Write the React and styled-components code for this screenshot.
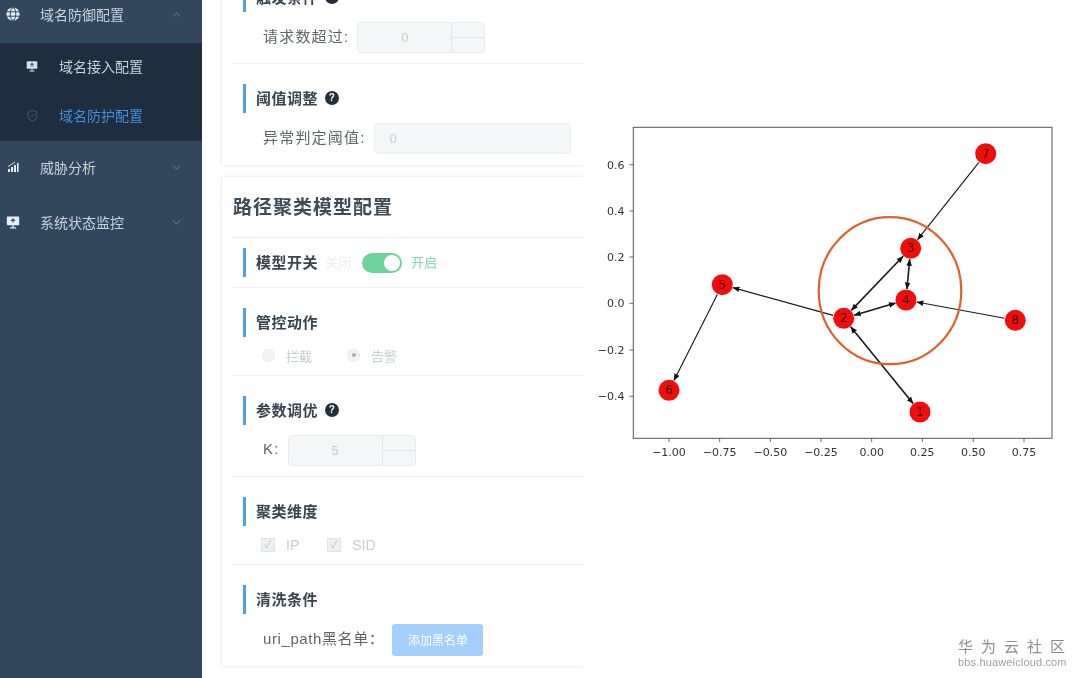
import React from 'react';
import styled, { createGlobalStyle } from 'styled-components';
import { ShieldCheck, ChevronDown, ChevronUp } from 'lucide-react';

const FONT = '"Liberation Sans", "Noto Sans CJK SC", sans-serif';

// graph data, in page pixels
const NODES = {
  1: [920, 412],
  2: [843.7, 318.3],
  3: [910.7, 248.3],
  4: [906, 300],
  5: [722.3, 284.7],
  6: [669, 390.3],
  7: [985.7, 153.7],
  8: [1015.3, 320.3],
};

const EDGES = [
  [1, 2, true],
  [2, 3, true],
  [2, 4, true],
  [3, 4, true],
  [2, 5, false],
  [5, 6, false],
  [7, 3, false],
  [8, 4, false],
];

const X_TICKS = [
  ['−1.00', 669],
  ['−0.75', 719.7],
  ['−0.50', 770.3],
  ['−0.25', 821],
  ['0.00', 871.7],
  ['0.25', 922.3],
  ['0.50', 973.3],
  ['0.75', 1024],
];

const Y_TICKS = [
  ['0.6', 164.7],
  ['0.4', 211],
  ['0.2', 257],
  ['0.0', 303.3],
  ['−0.2', 350],
  ['−0.4', 396.3],
];

const edgeLine = ([from, to]) => {
  const [x1, y1] = NODES[from];
  const [x2, y2] = NODES[to];
  const len = Math.hypot(x2 - x1, y2 - y1);
  const ux = (x2 - x1) / len;
  const uy = (y2 - y1) / len;
  const gap = 11;
  return {
    x1: x1 + ux * gap,
    y1: y1 + uy * gap,
    x2: x2 - ux * gap,
    y2: y2 - uy * gap,
  };
};

const BarsIcon = () => (
  <svg width="12" height="12" viewBox="0 0 12 12" fill="currentColor">
    <rect x="1" y="8" width="2" height="3" />
    <rect x="4" y="6" width="2" height="5" />
    <rect x="7" y="4" width="2" height="7" />
    <rect x="10" y="2" width="1.6" height="9" />
    <path d="M1 5.5 L6 2.5 L8 1" fill="none" stroke="currentColor" strokeWidth="0.9" />
  </svg>
);

const GlobeIcon = () => (
  <svg width="14" height="14" viewBox="0 0 14 14">
    <circle cx="7" cy="7" r="6.6" fill="currentColor" />
    <g fill="none" stroke="#33475c" strokeWidth="1">
      <ellipse cx="7" cy="7" rx="2.8" ry="6.4" />
      <path d="M0.6 4.8 H13.4 M0.6 9.2 H13.4" />
    </g>
  </svg>
);

const ScreenIcon = ({ size, back }) => (
  <svg width={size} height={size} viewBox="0 0 14 14">
    <rect x="0.8" y="1.4" width="12.4" height="8.8" rx="1" fill="currentColor" />
    <path d="M5 5.8 L7 4 L9 5.8 M7 4.4 V7.6" fill="none" stroke={back} strokeWidth="1.1" />
    <path d="M7 10 V12.4 M4 12.8 H10" fill="none" stroke="currentColor" strokeWidth="1.3" />
  </svg>
);

const Graph = () => (
  <ChartSvg viewBox="583 0 497 480">
    <defs>
      <marker
        id="head"
        viewBox="0 0 8 8"
        refX="7.5"
        refY="4"
        markerWidth="7"
        markerHeight="7"
        markerUnits="userSpaceOnUse"
        orient="auto-start-reverse"
      >
        <path d="M0 0.8 L8 4 L0 7.2 Z" fill="#111" />
      </marker>
    </defs>
    <rect x="633.3" y="127.3" width="418.7" height="311" fill="none" stroke="#555" strokeWidth="1" />
    {X_TICKS.map(([label, x]) => (
      <g key={label}>
        <line x1={x} x2={x} y1="438.3" y2="442" stroke="#444" strokeWidth="0.8" />
        <text x={x} y="456" textAnchor="middle" fontSize="11" fill="#333">
          {label}
        </text>
      </g>
    ))}
    {Y_TICKS.map(([label, y]) => (
      <g key={label}>
        <line x1="629.5" x2="633.3" y1={y} y2={y} stroke="#444" strokeWidth="0.8" />
        <text x="624.5" y={y + 4} textAnchor="end" fontSize="11" fill="#333">
          {label}
        </text>
      </g>
    ))}
    {EDGES.map((edge) => (
      <line
        key={edge.join('-')}
        {...edgeLine(edge)}
        stroke="#1a1a1a"
        strokeWidth={edge[2] ? 1.6 : 1.15}
        markerEnd="url(#head)"
        markerStart={edge[2] ? 'url(#head)' : undefined}
      />
    ))}
    {Object.entries(NODES).map(([id, [cx, cy]]) => (
      <g key={id}>
        <circle cx={cx} cy={cy} r="10.5" fill="#f20d0d" />
        <text x={cx} y={cy + 4} textAnchor="middle" fontSize="12" fill="#3a0a0a">
          {id}
        </text>
      </g>
    ))}
    <ellipse cx="890" cy="290.7" rx="71.3" ry="73.5" fill="none" stroke="#e0602a" strokeWidth="2.2" />
  </ChartSvg>
);

const Stepper = ({ value }) => (
  <NumberBox>
    <NumberValue>{value}</NumberValue>
    <StepButtons>
      <StepCell />
      <StepCell />
    </StepButtons>
  </NumberBox>
);

const App = () => (
  <Page>
    <GlobalStyle />
    <Sidebar>
      <TopItem $first>
        <IconSlot><GlobeIcon /></IconSlot>
        <ItemText>域名防御配置</ItemText>
        <ChevronUp size={13} color="#5f7183" />
      </TopItem>
      <SubMenu>
        <SubItem>
          <IconSlot><ScreenIcon size={12} back="#1f2d3e" /></IconSlot>
          <ItemText>域名接入配置</ItemText>
        </SubItem>
        <SubItem $active>
          <IconSlot><ShieldCheck size={13} strokeWidth={1.9} /></IconSlot>
          <ItemText>域名防护配置</ItemText>
        </SubItem>
      </SubMenu>
      <TopItem>
        <IconSlot><BarsIcon /></IconSlot>
        <ItemText>威胁分析</ItemText>
        <ChevronDown size={13} color="#5f7183" />
      </TopItem>
      <TopItem>
        <IconSlot><ScreenIcon size={14} back="#33475c" /></IconSlot>
        <ItemText>系统状态监控</ItemText>
        <ChevronDown size={13} color="#5f7183" />
      </TopItem>
    </Sidebar>

    <Main>
      <Card>
        <Section>
          <SectionTitle>触发条件<Help>?</Help></SectionTitle>
          <Row>
            <FieldLabel>请求数超过:</FieldLabel>
            <Stepper value="0" />
          </Row>
        </Section>
        <Section $last>
          <SectionTitle>阈值调整<Help>?</Help></SectionTitle>
          <Row>
            <FieldLabel>异常判定阈值:</FieldLabel>
            <PlainInput>0</PlainInput>
          </Row>
        </Section>
      </Card>

      <Card>
        <CardTitle>路径聚类模型配置</CardTitle>
        <Section $tight>
          <SectionTitle>
            模型开关
            <SwitchText>关闭</SwitchText>
            <SwitchTrack />
            <SwitchText $on>开启</SwitchText>
          </SectionTitle>
        </Section>
        <Section>
          <SectionTitle>管控动作</SectionTitle>
          <ChoiceRow>
            <Choice><RadioDot /><span>拦截</span></Choice>
            <Choice><RadioDot $checked /><span>告警</span></Choice>
          </ChoiceRow>
        </Section>
        <Section>
          <SectionTitle>参数调优<Help>?</Help></SectionTitle>
          <Row>
            <FieldLabel>K:</FieldLabel>
            <Stepper value="5" />
          </Row>
        </Section>
        <Section>
          <SectionTitle>聚类维度</SectionTitle>
          <ChoiceRow $check>
            <Choice><CheckBox>✓</CheckBox><span>IP</span></Choice>
            <Choice><CheckBox>✓</CheckBox><span>SID</span></Choice>
          </ChoiceRow>
        </Section>
        <Section $last>
          <SectionTitle>清洗条件</SectionTitle>
          <Row>
            <FieldLabel $narrow>uri_path黑名单：</FieldLabel>
            <AddButton>添加黑名单</AddButton>
          </Row>
        </Section>
      </Card>
    </Main>

    <ChartColumn>
      <Graph />
      <Watermark>
        <WatermarkName>华为云社区</WatermarkName>
        <WatermarkUrl>bbs.huaweicloud.com</WatermarkUrl>
      </Watermark>
    </ChartColumn>
  </Page>
);

const GlobalStyle = createGlobalStyle`
  html, body {
    margin: 0;
    padding: 0;
    background: #fff;
    font-family: ${FONT};
  }
`;

const Page = styled.div`
  display: flex;
  width: 1080px;
  height: 678px;
  overflow: hidden;
  background: #fff;
  filter: blur(0.45px);
`;

const Sidebar = styled.nav`
  flex: 0 0 202px;
  background: #33475c;
  color: #c3cdd8;
  font-size: 14px;
`;

const IconSlot = styled.span`
  display: flex;
  justify-content: center;
  align-items: center;
  width: 14px;
  height: 14px;
`;

const ItemText = styled.span`
  flex: 1;
`;

const TopItem = styled.div`
  display: flex;
  align-items: center;
  gap: 20px;
  height: 55px;
  box-sizing: border-box;
  padding: 0 19px 3px 6px;
  margin-top: ${(props) => (props.$first ? '-12px' : '0')};
  color: #c9d2db;
  svg {
    flex-shrink: 0;
  }
  ${IconSlot} {
    color: #e8edf2;
  }
`;

const SubMenu = styled.div`
  background: #1f2d3e;
`;

const SubItem = styled.div`
  display: flex;
  align-items: center;
  gap: 20px;
  height: 49px;
  box-sizing: border-box;
  padding: 0 0 3px 25px;
  color: ${(props) => (props.$active ? '#3f8fdc' : '#c9d2db')};
  ${IconSlot} {
    color: ${(props) => (props.$active ? '#34567a' : '#d5dce3')};
  }
`;

const Main = styled.main`
  flex: 0 0 381px;
  display: flex;
  flex-direction: column;
  gap: 12px;
  height: 715px;
  margin-top: -37px;
  padding-left: 20px;
  box-sizing: border-box;
  overflow: hidden;
`;

const Card = styled.section`
  width: 380px;
  flex-shrink: 0;
  padding-left: 10px;
  box-sizing: border-box;
  background: #fff;
  box-shadow: 0 0 3px rgba(0, 0, 0, 0.14);
`;

const CardTitle = styled.h2`
  display: flex;
  align-items: center;
  height: 61px;
  box-sizing: border-box;
  margin: 0;
  padding: 0 0 3px 1px;
  font-size: 19px;
  font-weight: 700;
  letter-spacing: 1px;
  color: #3d4b58;
  border-bottom: 1px solid #eef0f3;
`;

const Section = styled.div`
  padding: ${(props) => (props.$tight ? '10px' : '20px')} 0 ${(props) => (props.$last ? '11px' : '10px')} 11px;
  border-bottom: ${(props) => (props.$last ? 'none' : '1px solid #eef0f3')};
`;

const SectionTitle = styled.div`
  display: flex;
  align-items: center;
  height: 29px;
  box-sizing: border-box;
  padding: 0 0 3px 10px;
  border-left: 3px solid #4f9fe6;
  font-size: 15px;
  font-weight: 700;
  letter-spacing: 0.5px;
  color: #36454f;
`;

const Help = styled.span`
  display: inline-flex;
  justify-content: center;
  align-items: center;
  width: 14px;
  height: 14px;
  margin: 2px 0 0 7px;
  border-radius: 50%;
  background: #22303d;
  color: #fff;
  font-size: 10px;
  font-weight: 700;
  line-height: 1;
`;

const Row = styled.div`
  display: flex;
  align-items: center;
  gap: 8px;
  height: 31px;
  margin-top: 10px;
  padding-left: 20px;
`;

const FieldLabel = styled.label`
  padding-bottom: 5px;
  font-size: 15px;
  letter-spacing: ${(props) => (props.$narrow ? '0.6px' : '1.2px')};
  color: #5f6468;
  white-space: nowrap;
`;

const NumberBox = styled.div`
  display: flex;
  width: 128px;
  height: 31px;
  box-sizing: border-box;
  border: 1px solid #e9ebef;
  border-radius: 4px;
  background: #f5f6f8;
`;

const NumberValue = styled.span`
  flex: 1;
  text-align: center;
  line-height: 29px;
  font-size: 13px;
  color: #c6cad1;
`;

const StepButtons = styled.div`
  display: flex;
  flex-direction: column;
  width: 32px;
  border-left: 1px solid #e2e4e9;
`;

const StepCell = styled.span`
  flex: 1;
  & + & {
    border-top: 1px solid #dfe2e7;
  }
`;

const PlainInput = styled.div`
  width: 197px;
  height: 31px;
  padding-left: 15px;
  box-sizing: border-box;
  border: 1px solid #eceef1;
  border-radius: 4px;
  background: #f5f6f8;
  font-size: 13px;
  line-height: 29px;
  color: #c6cad1;
`;

const SwitchText = styled.span`
  margin-left: ${(props) => (props.$on ? '9px' : '7px')};
  font-size: 13px;
  font-weight: 400;
  letter-spacing: 0;
  color: ${(props) => (props.$on ? '#83dcb0' : '#f4e9f3')};
`;

const SwitchTrack = styled.span`
  position: relative;
  width: 40px;
  height: 20px;
  margin: 3px 0 0 11px;
  border-radius: 10px;
  background: #6dd39b;
  &::after {
    content: '';
    position: absolute;
    top: 2px;
    right: 2px;
    width: 16px;
    height: 16px;
    border-radius: 50%;
    background: #fff;
  }
`;

const ChoiceRow = styled.div`
  display: flex;
  gap: ${(props) => (props.$check ? '28px' : '35px')};
  align-items: center;
  height: 20px;
  box-sizing: border-box;
  margin-top: 8px;
  padding: ${(props) => (props.$check ? '1px 0 0 18px' : '0 0 0 19px')};
  font-size: ${(props) => (props.$check ? '14px' : '13px')};
`;

const Choice = styled.span`
  display: flex;
  align-items: center;
  gap: 11px;
  color: #c8ccd3;
`;

const RadioDot = styled.span`
  display: flex;
  justify-content: center;
  align-items: center;
  width: 13px;
  height: 13px;
  box-sizing: border-box;
  border: 1px solid #e6e8ec;
  border-radius: 50%;
  background: #f3f4f6;
  &::after {
    content: '';
    width: 4px;
    height: 4px;
    border-radius: 50%;
    background: ${(props) => (props.$checked ? '#a9aeb6' : 'transparent')};
  }
`;

const CheckBox = styled.span`
  display: flex;
  justify-content: center;
  align-items: center;
  width: 14px;
  height: 14px;
  box-sizing: border-box;
  border: 1px solid #dfe2e6;
  background: #eef0f2;
  font-size: 10px;
  line-height: 1;
  color: #b4b9c0;
`;

const AddButton = styled.button`
  width: 91px;
  height: 32px;
  padding: 0;
  border: none;
  border-radius: 3px;
  background: #a3cffb;
  color: #fff;
  font-family: inherit;
  font-size: 12px;
`;

const ChartColumn = styled.div`
  flex: 1;
  display: flex;
  flex-direction: column;
  height: 678px;
`;

const ChartSvg = styled.svg`
  display: block;
  width: 497px;
  height: 480px;
  font-family: "DejaVu Sans", sans-serif;
`;

const Watermark = styled.div`
  align-self: flex-end;
  width: 110px;
  margin-top: auto;
  padding: 0 12px 9px 0;
  color: #8d8d8d;
`;

const WatermarkName = styled.div`
  font-size: 15px;
  line-height: 18px;
  letter-spacing: 8px;
  white-space: nowrap;
`;

const WatermarkUrl = styled.div`
  font-size: 11px;
  line-height: 13px;
  letter-spacing: 0.15px;
  white-space: nowrap;
  color: #a0a0a0;
`;

export default App;
